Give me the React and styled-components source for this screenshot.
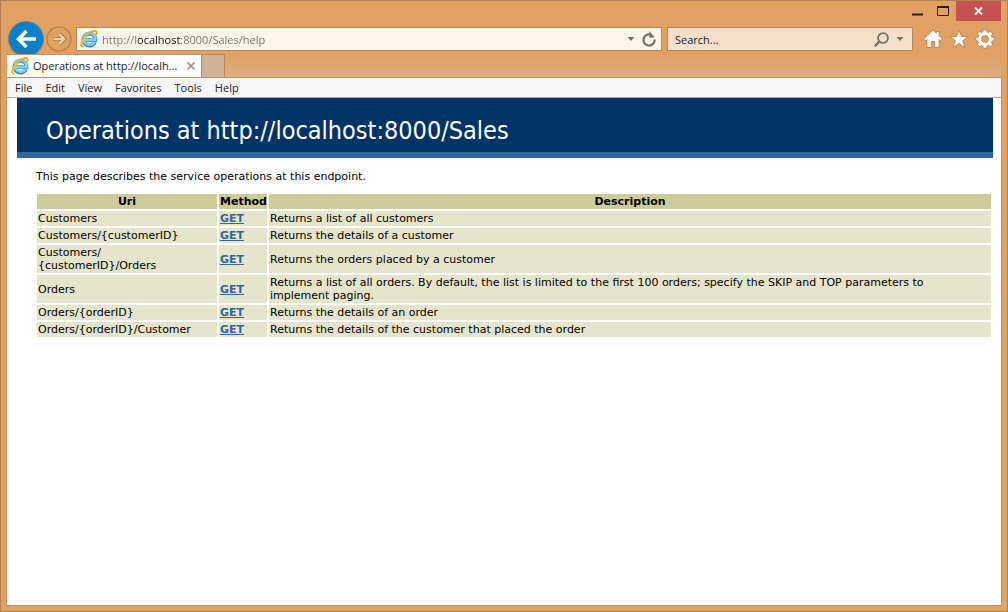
import React from "react";
import styled, { createGlobalStyle } from "styled-components";

const ui = `"Open Sans", "Noto Sans", sans-serif`;
const doc = `"DejaVu Sans", sans-serif`;

const GlobalStyle = createGlobalStyle`
  * { box-sizing: border-box; }
  body { margin: 0; }
  button { border: 0; padding: 0; background: none; font: inherit; color: inherit; }
  svg { display: block; flex: none; }
`;

const Window = styled.div`
  min-height: 100vh;
  display: flex;
  flex-direction: column;
  padding: 0 5px 5px;
  border: 1px solid #b58150;
  background: #e0a163;
  font: 11px/16px ${ui};
  color: #222;
`;

const Caption = styled.div`
  display: flex;
  justify-content: flex-end;
  padding-right: 1px;
  height: 20px;
`;

const CaptionButton = styled.button`
  display: flex;
  align-items: center;
  justify-content: center;
  width: ${(p) => (p.$close ? "45px" : "26px")};
  height: 20px;
  background: ${(p) => (p.$close ? "#c75050" : "transparent")};
`;

const NavRow = styled.div`
  display: flex;
  align-items: center;
  height: 36px;
  margin-bottom: -3px;
  padding: 0 4px 0 2px;
`;

const RoundButton = styled.button`
  flex: none;
  margin-right: ${(p) => p.$gap}px;
`;

const Field = styled.form`
  display: flex;
  align-items: center;
  flex: ${(p) => (p.$width ? `0 0 ${p.$width}px` : "1")};
  height: 24px;
  margin-right: 5px;
  padding: 0 3px;
  border: 1px solid #b68a61;
  background: ${(p) => p.$bg};
`;

const TextInput = styled.input`
  flex: 1;
  min-width: 0;
  height: 20px;
  margin-left: 4px;
  padding: 0;
  border: 0;
  outline: 0;
  background: transparent;
  font: 11px/16px ${ui};
  color: #222;
  &::placeholder { color: #222; opacity: 1; }
`;

const AddressInput = styled(TextInput)`
  background: linear-gradient(to right, #77726d 34px, #111 34px, #111 79px, #77726d 79px);
  background-clip: text;
  -webkit-background-clip: text;
  -webkit-text-fill-color: transparent;
`;

const IconButton = styled.button`
  display: flex;
  align-items: center;
  justify-content: center;
  flex: none;
  width: ${(p) => p.$w}px;
  height: 22px;
`;

const Tools = styled.div`
  display: flex;
  margin-left: 2px;
`;

const TabRow = styled.div`
  position: relative;
  display: flex;
  height: 23px;
  padding: 0 1px;
`;

const Tab = styled.div`
  display: flex;
  align-items: center;
  width: 195px;
  padding: 0 4px;
  border-top: 1px solid #c0925f;
  border-right: 1px solid #b78a5d;
  background: #fff;
`;

const TabTitle = styled.span`
  flex: 1;
  margin-left: 4px;
  white-space: nowrap;
`;

const NewTab = styled.button`
  width: 23px;
  border: 1px solid #b78a5d;
  border-left: 0;
  border-bottom: 0;
  background: #ceb398;
`;

const TabSpace = styled.div`
  flex: 1;
  background: linear-gradient(#e0a163, #dcaf84);
`;

const Panel = styled.div`
  flex: 1;
  display: flex;
  flex-direction: column;
  border: 1px solid #c39060;
  background: #fff;
`;

const MenuBar = styled.nav`
  display: flex;
  gap: 13px;
  height: 20px;
  padding: 0 8px;
  border-bottom: 1px solid #a9a9a9;
  background: #f6f6f6;
`;

const Page = styled.main`
  flex: 1;
  padding: 0 8px 0 10px;
  font: 11px/13px ${doc};
  color: #000;
`;

const Heading = styled.h1`
  margin: 0;
  padding: 17px 0 5px 29px;
  border-bottom: 6px solid #336699;
  background: #003366;
  color: #fff;
  font: 25px/32px "DejaVu Sans Condensed", "Noto Sans", sans-serif;
`;

const Intro = styled.p`
  margin: 12px 0 9px 19px;
`;

const TableWrap = styled.div`
  padding-left: 18px;
`;

const Table = styled.table`
  width: 100%;
  table-layout: fixed;
  border-spacing: 2px;
  th, td { padding: 1px; }
  th { background: #cccc99; font-weight: bold; white-space: nowrap; }
  td { background: #e5e5cc; }
  td:last-child { padding-right: 8px; }
  a { color: #336699; font-weight: bold; text-decoration: underline; }
`;

const Col = styled.col`
  width: ${(p) => p.$w};
`;

const rows = [
  ["Customers", "Returns a list of all customers"],
  ["Customers/{customerID}", "Returns the details of a customer"],
  ["Customers/\u200b{customerID}/Orders", "Returns the orders placed by a customer"],
  ["Orders", "Returns a list of all orders. By default, the list is limited to the first 100 orders; specify the SKIP and TOP parameters to implement paging."],
  ["Orders/{orderID}", "Returns the details of an order"],
  ["Orders/{orderID}/Customer", "Returns the details of the customer that placed the order"],
];

const Browser = () => (
  <svg width="18" height="18" viewBox="0 0 18 18" fill="none" aria-hidden="true">
    <path d="M15 12.100A6 6 0 1 1 15.500 9.800H6" stroke="#2b8fc9" strokeWidth="3.800" />
    <path d="M14.600 12A5.900 5.900 0 1 1 15.400 9.700H6" stroke="#7dd2f4" strokeWidth="2.400" />
    <path d="M3.500 16.900C-.8 16.500 1.700 9.200 7 4.600 11.300 1 16.500-.1 16.700 2.400c.1.900-.2 1.700-.6 2.500" stroke="#e9ac10" strokeWidth="1.900" />
    <path d="M2.800 16C.4 14.700 3 8.700 8 4.400" stroke="#fcd94c" strokeWidth=".9" />
  </svg>
);

const Caret = () => (
  <svg width="8" height="5" viewBox="0 0 8 5"><path d="M.5 0h7L4 4z" fill="#777267" /></svg>
);

export default function App() {
  return (
    <>
      <GlobalStyle />
      <Window>
        <Caption>
          <CaptionButton aria-label="Minimize">
            <svg width="11" height="10"><path d="M0 8.500h11" stroke="#222" strokeWidth="2" /></svg>
          </CaptionButton>
          <CaptionButton aria-label="Maximize">
            <svg width="12" height="10"><path d="M.5 1v8.500h11V1" fill="none" stroke="#222" /><path d="M0 1h12" stroke="#222" strokeWidth="2" /></svg>
          </CaptionButton>
          <CaptionButton $close aria-label="Close">
            <svg width="9" height="8" viewBox="0 0 9 8"><path d="M1 .5l7 7M8 .5l-7 7" stroke="#fff" strokeWidth="1.900" /></svg>
          </CaptionButton>
        </Caption>
        <NavRow>
          <RoundButton $gap={2} aria-label="Back">
            <svg width="36" height="36" viewBox="0 0 36 36" fill="none">
              <circle cx="18" cy="18" r="17.500" fill="#0b80c9" stroke="#7d8083" />
              <path d="M28 18H10.500M18.500 10l-8 8 8 8" stroke="#fff" strokeWidth="3.500" />
            </svg>
          </RoundButton>
          <RoundButton $gap={4} aria-label="Forward">
            <svg width="26" height="26" viewBox="0 0 26 26" fill="none">
              <circle cx="13" cy="13" r="12" stroke="#b47c49" strokeWidth="1.200" />
              <path d="M7 13h11M13.200 7.500l5.500 5.500-5.500 5.500" stroke="#b47c49" strokeWidth="3.600" />
              <path d="M7.500 13h10.500M13.200 8l5 5-5 5" stroke="#f1d3b5" strokeWidth="2" />
            </svg>
          </RoundButton>
          <Field $bg="#fef4ea">
            <Browser />
            <AddressInput aria-label="Address" defaultValue="http://localhost:8000/Sales/help" />
            <IconButton type="button" $w={18} aria-label="Show addresses"><Caret /></IconButton>
            <IconButton type="button" $w={18} aria-label="Refresh">
              <svg width="14" height="16" viewBox="0 0 14 16" fill="none">
                <path d="M12.600 8.500A5.600 5.600 0 1 1 8 3.500" stroke="#777267" strokeWidth="2.200" />
                <path d="M7.500 0v7l5-.8z" fill="#777267" />
              </svg>
            </IconButton>
          </Field>
          <Field $width={246} $bg="#f6dfc9" role="search">
            <TextInput aria-label="Search" placeholder="Search..." />
            <IconButton type="button" $w={20} aria-label="Search">
              <svg width="15" height="15" viewBox="0 0 15 15" fill="none" stroke="#777267">
                <circle cx="9" cy="6" r="4.900" strokeWidth="1.900" />
                <path d="M5.500 9.500L.8 14.200" strokeWidth="2.400" />
              </svg>
            </IconButton>
            <IconButton type="button" $w={18} aria-label="Search options"><Caret /></IconButton>
          </Field>
          <Tools>
            <IconButton $w={26} aria-label="Home">
              <svg width="20" height="20" viewBox="0 0 20 20">
                <path d="M10 1L.8 10l1.700 1.800L4 10.600V18.500h4.300V12.500h3.400v6H16v-7.900l1.500 1.200L19.200 10 16 6.800V2.500h-2.700v1.700z" fill="#fff" stroke="#ad7e50" strokeWidth=".8" />
              </svg>
            </IconButton>
            <IconButton $w={26} aria-label="Favorites">
              <svg width="20" height="20" viewBox="0 0 20 20">
                <path d="M10 .8l2.300 6.500 6.900.2-5.500 4.200 2 6.700L10 14.400l-5.700 4 2-6.700L.8 7.500l6.900-.2z" fill="#fff" stroke="#ad7e50" strokeWidth=".8" />
              </svg>
            </IconButton>
            <IconButton $w={26} aria-label="Tools">
              <svg width="20" height="20" viewBox="0 0 20 20" fill="none">
                <g stroke="#ad7e50" strokeWidth="4.600">
                  <path d="M10 .6v3M10 16.400v3M.6 10h3M16.400 10h3M3.300 3.300l2.200 2.200M14.500 14.500l2.200 2.200M3.300 16.700l2.200-2.200M14.500 5.500l2.200-2.200" />
                  <circle cx="10" cy="10" r="5.400" />
                </g>
                <path d="M10 1.200v3M10 15.800v3M1.200 10h3M15.800 10h3M3.700 3.700l2.200 2.200M14.100 14.100l2.200 2.200M3.700 16.300l2.200-2.200M14.100 5.900l2.200-2.200" stroke="#fff" strokeWidth="3.200" />
                <circle cx="10" cy="10" r="5.400" stroke="#fff" strokeWidth="3.200" />
              </svg>
            </IconButton>
          </Tools>
        </NavRow>
        <TabRow>
          <Tab>
            <Browser />
            <TabTitle>Operations at http://localh...</TabTitle>
            <IconButton $w={12} aria-label="Close tab">
              <svg width="8" height="8" viewBox="0 0 8 8"><path d="M.5.500l7 7M7.500.500l-7 7" stroke="#999" strokeWidth="1.700" /></svg>
            </IconButton>
          </Tab>
          <NewTab aria-label="New tab" />
          <TabSpace />
        </TabRow>
        <Panel>
          <MenuBar>
            {["File", "Edit", "View", "Favorites", "Tools", "Help"].map((m) => (
              <button key={m}>{m}</button>
            ))}
          </MenuBar>
          <Page>
            <Heading>Operations at http://localhost:8000/Sales</Heading>
            <Intro>This page describes the service operations at this endpoint.</Intro>
            <TableWrap>
              <Table>
                <colgroup>
                  <Col $w="180px" />
                  <Col $w="48px" />
                  <Col $w="auto" />
                </colgroup>
                <thead>
                  <tr><th>Uri</th><th>Method</th><th>Description</th></tr>
                </thead>
                <tbody>
                  {rows.map(([uri, text]) => (
                    <tr key={uri}>
                      <td>{uri}</td>
                      <td><a href="#help">GET</a></td>
                      <td>{text}</td>
                    </tr>
                  ))}
                </tbody>
              </Table>
            </TableWrap>
          </Page>
        </Panel>
      </Window>
    </>
  );
}
